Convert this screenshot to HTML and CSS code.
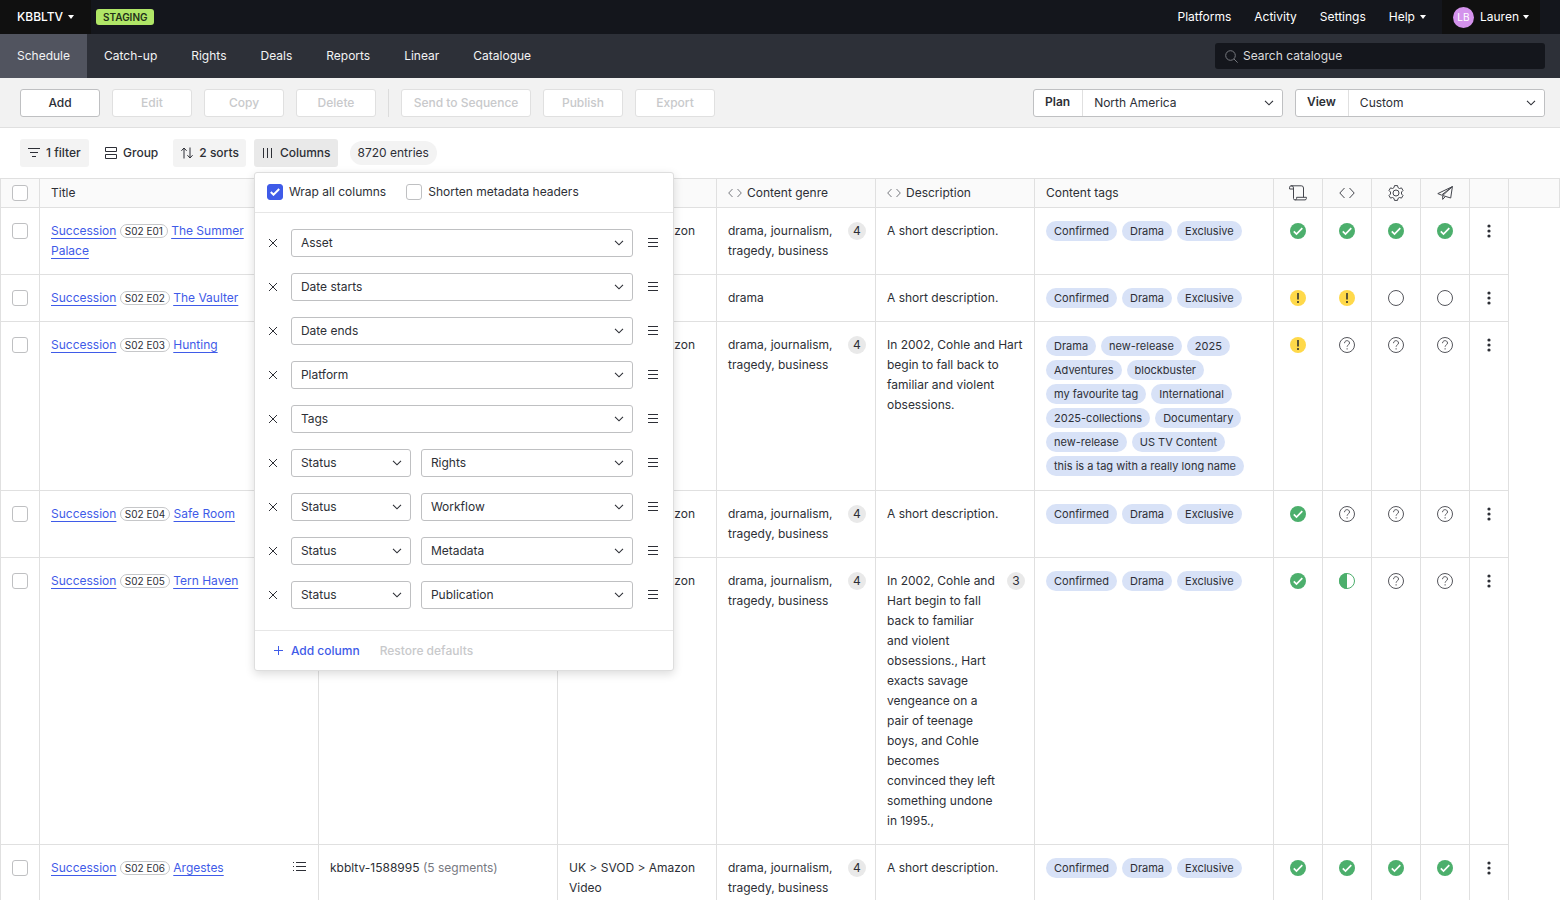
FILE: index.html
```html
<!DOCTYPE html>
<html lang="en">
<head>
<meta charset="utf-8">
<title>Schedule</title>
<link rel="stylesheet" href="styles.css">
</head>
<body>
<svg class="sprite" aria-hidden="true">
  <symbol id="i-ok" viewBox="0 0 16 16"><circle cx="8" cy="8" r="8" fill="#4caf6c"/><path d="M3.8 8.4l2.7 2.7 5.8-5.9" fill="none" stroke="#fff" stroke-width="1.7"/></symbol>
  <symbol id="i-warn" viewBox="0 0 16 16"><circle cx="8" cy="8" r="8" fill="#ffd94a"/><path d="M8 3v6.6M8 11v2" fill="none" stroke="#4b4632" stroke-width="1.8"/></symbol>
  <symbol id="i-none" viewBox="0 0 16 16"><circle cx="8" cy="8" r="7.5" fill="none" stroke="#55565c"/></symbol>
  <symbol id="i-unknown" viewBox="0 0 16 16"><circle cx="8" cy="8" r="7.5" fill="none" stroke="#55565c"/><path d="M5.5 6.200c0-3.400 5-3.300 5-.2 0 1.900-2.400 1.900-2.400 3.700M8.100 11.200v1.300" fill="none" stroke="#55565c"/></symbol>
  <symbol id="i-half" viewBox="0 0 16 16"><circle cx="8" cy="8" r="7.5" fill="none" stroke="#4caf6c"/><path d="M8 0a8 8 0 0 0 0 16z" fill="#4caf6c"/></symbol>
  <symbol id="i-more" viewBox="0 0 4 14"><circle cx="2" cy="2" r="1.600" fill="#2d2f36"/><circle cx="2" cy="7" r="1.600" fill="#2d2f36"/><circle cx="2" cy="12" r="1.600" fill="#2d2f36"/></symbol>
  <symbol id="i-code" viewBox="0 0 16 12"><path d="M5.500 1L.8 6l4.700 5M10.500 1l4.700 5-4.700 5" fill="none" stroke="currentColor"/></symbol>
  <symbol id="i-code-sm" viewBox="0 0 14 10"><path d="M4.500 1L.7 5l3.800 4M9.500 1l3.800 4-3.800 4" fill="none" stroke="currentColor"/></symbol>
  <symbol id="i-caret" viewBox="0 0 6 4"><path d="M0 0h6L3 4z" fill="#fff"/></symbol>
  <symbol id="i-x" viewBox="0 0 10 10"><path d="M1 1l8 8M9 1l-8 8" fill="none" stroke="#2d2f36"/></symbol>
  <symbol id="i-drag" viewBox="0 0 10 10"><path d="M0 .5h10M0 4.500h10M0 8.500h10" fill="none" stroke="#2d2f36"/></symbol>
  <symbol id="i-list" viewBox="0 0 14 10"><path d="M3 .5h10M3 4.500h10M3 8.500h10M0 .5h1M0 4.500h1M0 8.500h1" fill="none" stroke="#2d2f36"/></symbol>
</svg>

<header class="topbar">
  <button class="brand">KBBLTV <svg class="caret"><use href="#i-caret"/></svg></button>
  <span class="env">STAGING</span>
  <nav class="toplinks">
    <a href="#">Platforms</a>
    <a href="#">Activity</a>
    <a href="#">Settings</a>
    <button class="help">Help <svg class="caret"><use href="#i-caret"/></svg></button>
  </nav>
  <button class="user"><span class="avatar">LB</span><span>Lauren</span><svg class="caret"><use href="#i-caret"/></svg></button>
</header>

<div class="mainnav">
  <nav class="tabs">
    <a class="tab active" href="#">Schedule</a>
    <a class="tab" href="#">Catch-up</a>
    <a class="tab" href="#">Rights</a>
    <a class="tab" href="#">Deals</a>
    <a class="tab" href="#">Reports</a>
    <a class="tab" href="#">Linear</a>
    <a class="tab" href="#">Catalogue</a>
  </nav>
  <label class="search">
    <svg width="13" height="13" viewBox="0 0 13 13" fill="none" stroke="#77797f"><circle cx="5.500" cy="5.500" r="4.800"/><path d="M9 9l3.600 3.600"/></svg>
    <input type="text" placeholder="Search catalogue" aria-label="Search catalogue">
  </label>
</div>

<div class="toolbar">
  <button class="btn">Add</button>
  <button class="btn" disabled>Edit</button>
  <button class="btn" disabled>Copy</button>
  <button class="btn" disabled>Delete</button>
  <span class="divider"></span>
  <button class="btn wide" disabled>Send to Sequence</button>
  <button class="btn" disabled>Publish</button>
  <button class="btn" disabled>Export</button>
  <div class="picker first"><label for="plan">Plan</label><select id="plan"><option>North America</option></select></div>
  <div class="picker"><label for="view">View</label><select id="view"><option>Custom</option></select></div>
</div>

<div class="filters">
  <button class="chip filled"><svg width="12" height="10" viewBox="0 0 12 10" fill="none" stroke="#2d2f36"><path d="M0 .5h12M2 4.500h8M4 8.500h4"/></svg>1 filter</button>
  <button class="chip"><svg width="12" height="12" viewBox="0 0 12 12" fill="none" stroke="#2d2f36"><path d="M.5.5h11v4H.5zM.5 7.500h11v4H.5z"/></svg>Group</button>
  <button class="chip filled"><svg width="12" height="12" viewBox="0 0 12 12" fill="none" stroke="#2d2f36"><path d="M3 11.500V1M.4 3.800L3 1l2.600 2.800M9 .5V11M6.400 8.200L9 11l2.600-2.800"/></svg>2 sorts</button>
  <div class="columns-menu">
    <button class="chip open" aria-expanded="true"><svg width="12" height="10" viewBox="0 0 12 10" fill="none" stroke="#2d2f36"><path d="M1.500 0v10M5.500 0v10M9.500 0v10"/></svg>Columns</button>
    <div class="popover">
      <div class="pop-head">
        <label><input type="checkbox" checked>Wrap all columns</label>
        <label><input type="checkbox">Shorten metadata headers</label>
      </div>
      <ul class="pop-list">
        <li><button class="icon" aria-label="Remove"><svg width="10" height="10"><use href="#i-x"/></svg></button><select aria-label="Column"><option>Asset</option></select><button class="icon" aria-label="Reorder"><svg width="10" height="10"><use href="#i-drag"/></svg></button></li>
        <li><button class="icon" aria-label="Remove"><svg width="10" height="10"><use href="#i-x"/></svg></button><select aria-label="Column"><option>Date starts</option></select><button class="icon" aria-label="Reorder"><svg width="10" height="10"><use href="#i-drag"/></svg></button></li>
        <li><button class="icon" aria-label="Remove"><svg width="10" height="10"><use href="#i-x"/></svg></button><select aria-label="Column"><option>Date ends</option></select><button class="icon" aria-label="Reorder"><svg width="10" height="10"><use href="#i-drag"/></svg></button></li>
        <li><button class="icon" aria-label="Remove"><svg width="10" height="10"><use href="#i-x"/></svg></button><select aria-label="Column"><option>Platform</option></select><button class="icon" aria-label="Reorder"><svg width="10" height="10"><use href="#i-drag"/></svg></button></li>
        <li><button class="icon" aria-label="Remove"><svg width="10" height="10"><use href="#i-x"/></svg></button><select aria-label="Column"><option>Tags</option></select><button class="icon" aria-label="Reorder"><svg width="10" height="10"><use href="#i-drag"/></svg></button></li>
        <li><button class="icon" aria-label="Remove"><svg width="10" height="10"><use href="#i-x"/></svg></button><select class="kind" aria-label="Column"><option>Status</option></select><select aria-label="Status type"><option>Rights</option></select><button class="icon" aria-label="Reorder"><svg width="10" height="10"><use href="#i-drag"/></svg></button></li>
        <li><button class="icon" aria-label="Remove"><svg width="10" height="10"><use href="#i-x"/></svg></button><select class="kind" aria-label="Column"><option>Status</option></select><select aria-label="Status type"><option>Workflow</option></select><button class="icon" aria-label="Reorder"><svg width="10" height="10"><use href="#i-drag"/></svg></button></li>
        <li><button class="icon" aria-label="Remove"><svg width="10" height="10"><use href="#i-x"/></svg></button><select class="kind" aria-label="Column"><option>Status</option></select><select aria-label="Status type"><option>Metadata</option></select><button class="icon" aria-label="Reorder"><svg width="10" height="10"><use href="#i-drag"/></svg></button></li>
        <li><button class="icon" aria-label="Remove"><svg width="10" height="10"><use href="#i-x"/></svg></button><select class="kind" aria-label="Column"><option>Status</option></select><select aria-label="Status type"><option>Publication</option></select><button class="icon" aria-label="Reorder"><svg width="10" height="10"><use href="#i-drag"/></svg></button></li>
      </ul>
      <div class="pop-foot">
        <button class="add"><svg width="9" height="10" viewBox="0 0 9 10" fill="none" stroke="#3f5be8"><path d="M4.500 0v9M0 4.500h9"/></svg>Add column</button>
        <button class="restore" disabled>Restore defaults</button>
      </div>
    </div>
  </div>
  <span class="entries">8720 entries</span>
</div>

<table class="grid">
  <colgroup>
    <col class="c-check"><col class="c-title"><col class="c-wide"><col class="c-text"><col class="c-text"><col class="c-text"><col class="c-wide"><col class="c-stat"><col class="c-stat"><col class="c-stat"><col class="c-stat"><col class="c-more"><col>
  </colgroup>
  <thead>
    <tr>
      <th><input type="checkbox" aria-label="Select all"></th>
      <th>Title</th>
      <th></th>
      <th></th>
      <th><span class="meta"><svg width="14" height="10"><use href="#i-code-sm"/></svg>Content genre</span></th>
      <th><span class="meta"><svg width="14" height="10"><use href="#i-code-sm"/></svg>Description</span></th>
      <th>Content tags</th>
      <th class="mid"><svg width="18" height="16" viewBox="0 0 18 16" fill="none" stroke="#44464d"><path d="M4.500 4V13.500a1.500 1.500 0 0 0 1.700 1.400H16a1.500 1.500 0 0 0 1.400-1.400v-1.200H7.600v1.200a1.500 1.500 0 0 1-1.400 1.400M14.500 12.300V3A2.200 2.200 0 0 0 12.300.8H2M.6 4V2.200A1.500 1.500 0 0 1 2 .8a2.200 2.200 0 0 1 2.500 2.200V4z"/></svg></th>
      <th class="mid"><svg width="16" height="12"><use href="#i-code"/></svg></th>
      <th class="mid"><svg width="16" height="16" viewBox="0 0 16 16" fill="none" stroke="#44464d" stroke-linejoin="round"><circle cx="8" cy="8" r="3"/><path d="M6.500.6h3l.5 2 1.500.9 2-.6 1.500 2.600-1.500 1.500v2l1.500 1.500-1.500 2.600-2-.6-1.500.9-.5 2h-3l-.5-2-1.500-.9-2 .6L1 10.500 2.500 9V7L1 5.500l1.500-2.600 2 .6L6 2.600z"/></svg></th>
      <th class="mid"><svg width="16" height="14" viewBox="0 0 16 14" fill="none" stroke="#44464d" stroke-linejoin="round"><path d="M15.400.6L.8 7.600l3.700 1.500zM15.400.6L5.700 9.500V13.400L8.300 10.600M15.400.6L13.700 12 5.700 9.500"/></svg></th>
      <th></th>
      <th></th>
    </tr>
  </thead>
  <tbody>
    <tr>
      <td><input type="checkbox" aria-label="Select row"></td>
      <td><div class="split"><div><a href="#">Succession</a> <span class="ep">S02 E01</span> <a href="#">The Summer Palace</a></div><svg class="list" width="14" height="10"><use href="#i-list"/></svg></div></td>
      <td></td>
      <td>UK &gt; SVOD &gt; Amazon Video</td>
      <td><div class="split"><div>drama, journalism, tragedy, business</div><span class="count">4</span></div></td>
      <td>A short description.</td>
      <td><div class="tags"><span>Confirmed</span><span>Drama</span><span>Exclusive</span></div></td>
      <td class="mid"><svg class="st"><use href="#i-ok"/></svg></td>
      <td class="mid"><svg class="st"><use href="#i-ok"/></svg></td>
      <td class="mid"><svg class="st"><use href="#i-ok"/></svg></td>
      <td class="mid"><svg class="st"><use href="#i-ok"/></svg></td>
      <td class="mid"><button class="more" aria-label="More"><svg width="4" height="14"><use href="#i-more"/></svg></button></td>
    </tr>
    <tr>
      <td><input type="checkbox" aria-label="Select row"></td>
      <td><div class="split"><div><a href="#">Succession</a> <span class="ep">S02 E02</span> <a href="#">The Vaulter</a></div></div></td>
      <td></td>
      <td></td>
      <td>drama</td>
      <td>A short description.</td>
      <td><div class="tags"><span>Confirmed</span><span>Drama</span><span>Exclusive</span></div></td>
      <td class="mid"><svg class="st"><use href="#i-warn"/></svg></td>
      <td class="mid"><svg class="st"><use href="#i-warn"/></svg></td>
      <td class="mid"><svg class="st"><use href="#i-none"/></svg></td>
      <td class="mid"><svg class="st"><use href="#i-none"/></svg></td>
      <td class="mid"><button class="more" aria-label="More"><svg width="4" height="14"><use href="#i-more"/></svg></button></td>
    </tr>
    <tr>
      <td><input type="checkbox" aria-label="Select row"></td>
      <td><div class="split"><div><a href="#">Succession</a> <span class="ep">S02 E03</span> <a href="#">Hunting</a></div></div></td>
      <td></td>
      <td>UK &gt; SVOD &gt; Amazon Video</td>
      <td><div class="split"><div>drama, journalism, tragedy, business</div><span class="count">4</span></div></td>
      <td>In 2002, Cohle and Hart begin to fall back to familiar and violent obsessions.</td>
      <td><div class="tags many"><span>Drama</span><span>new-release</span><span>2025</span><span>Adventures</span><span>blockbuster</span><span>my favourite tag</span><span>International</span><span>2025-collections</span><span>Documentary</span><span>new-release</span><span>US TV Content</span><span>this is a tag with a really long name</span></div></td>
      <td class="mid"><svg class="st"><use href="#i-warn"/></svg></td>
      <td class="mid"><svg class="st"><use href="#i-unknown"/></svg></td>
      <td class="mid"><svg class="st"><use href="#i-unknown"/></svg></td>
      <td class="mid"><svg class="st"><use href="#i-unknown"/></svg></td>
      <td class="mid"><button class="more" aria-label="More"><svg width="4" height="14"><use href="#i-more"/></svg></button></td>
    </tr>
    <tr>
      <td><input type="checkbox" aria-label="Select row"></td>
      <td><div class="split"><div><a href="#">Succession</a> <span class="ep">S02 E04</span> <a href="#">Safe Room</a></div></div></td>
      <td></td>
      <td>UK &gt; SVOD &gt; Amazon Video</td>
      <td><div class="split"><div>drama, journalism, tragedy, business</div><span class="count">4</span></div></td>
      <td>A short description.</td>
      <td><div class="tags"><span>Confirmed</span><span>Drama</span><span>Exclusive</span></div></td>
      <td class="mid"><svg class="st"><use href="#i-ok"/></svg></td>
      <td class="mid"><svg class="st"><use href="#i-unknown"/></svg></td>
      <td class="mid"><svg class="st"><use href="#i-unknown"/></svg></td>
      <td class="mid"><svg class="st"><use href="#i-unknown"/></svg></td>
      <td class="mid"><button class="more" aria-label="More"><svg width="4" height="14"><use href="#i-more"/></svg></button></td>
    </tr>
    <tr>
      <td><input type="checkbox" aria-label="Select row"></td>
      <td><div class="split"><div><a href="#">Succession</a> <span class="ep">S02 E05</span> <a href="#">Tern Haven</a></div></div></td>
      <td></td>
      <td>UK &gt; SVOD &gt; Amazon Video</td>
      <td><div class="split"><div>drama, journalism, tragedy, business</div><span class="count">4</span></div></td>
      <td><div class="split"><div>In 2002, Cohle and Hart begin to fall back to familiar and violent obsessions., Hart exacts savage vengeance on a pair of teenage boys, and Cohle becomes convinced they left something undone in 1995.,</div><span class="count">3</span></div></td>
      <td><div class="tags"><span>Confirmed</span><span>Drama</span><span>Exclusive</span></div></td>
      <td class="mid"><svg class="st"><use href="#i-ok"/></svg></td>
      <td class="mid"><svg class="st"><use href="#i-half"/></svg></td>
      <td class="mid"><svg class="st"><use href="#i-unknown"/></svg></td>
      <td class="mid"><svg class="st"><use href="#i-unknown"/></svg></td>
      <td class="mid"><button class="more" aria-label="More"><svg width="4" height="14"><use href="#i-more"/></svg></button></td>
    </tr>
    <tr>
      <td><input type="checkbox" aria-label="Select row"></td>
      <td><div class="split"><div><a href="#">Succession</a> <span class="ep">S02 E06</span> <a href="#">Argestes</a></div><svg class="list" width="14" height="10"><use href="#i-list"/></svg></div></td>
      <td>kbbltv-1588995 <span class="muted">(5 segments)</span></td>
      <td>UK &gt; SVOD &gt; Amazon Video</td>
      <td><div class="split"><div>drama, journalism, tragedy, business</div><span class="count">4</span></div></td>
      <td>A short description.</td>
      <td><div class="tags"><span>Confirmed</span><span>Drama</span><span>Exclusive</span></div></td>
      <td class="mid"><svg class="st"><use href="#i-ok"/></svg></td>
      <td class="mid"><svg class="st"><use href="#i-ok"/></svg></td>
      <td class="mid"><svg class="st"><use href="#i-ok"/></svg></td>
      <td class="mid"><svg class="st"><use href="#i-ok"/></svg></td>
      <td class="mid"><button class="more" aria-label="More"><svg width="4" height="14"><use href="#i-more"/></svg></button></td>
    </tr>
  </tbody>
</table>
</body>
</html>
```
FILE: styles.css
```css
* { box-sizing: border-box; }
html { height: 100%; overflow: hidden; }
body {
  margin: 0;
  background: #fff;
  color: #2d2f36;
  font-family: Inter, "Liberation Sans", sans-serif;
  font-size: 12px;
  line-height: 20px;
}
button, input, select { font: inherit; color: inherit; }
button { margin: 0; padding: 0; border: 0; background: none; }
svg { display: block; flex: none; }
.sprite { position: absolute; width: 0; height: 0; }
.caret { width: 6px; height: 4px; }

.topbar { display: flex; align-items: center; height: 34px; background: #14161c; color: #fff; }
.topbar a { color: inherit; text-decoration: none; }
.brand {
  display: flex; align-items: center; gap: 5px;
  height: 34px; padding: 0 17px; background: #101010; font-weight: 500;
}
.env {
  margin-left: 5px; padding: 0 7px; border-radius: 3px;
  background: #b0e667; color: #23301a;
  font-size: 10px; font-weight: 600; line-height: 16px;
}
.toplinks { display: flex; align-items: center; gap: 23px; margin-left: auto; }
.help { display: flex; align-items: center; gap: 5px; }
.user {
  display: flex; align-items: center; gap: 4px;
  height: 34px; margin: 0 20px 0 16px; padding: 0 11px; background: #101010;
}
.avatar {
  width: 21px; height: 21px; margin-right: 2px; border-radius: 50%;
  background: #d492ec; font-size: 10px; line-height: 21px; text-align: center;
}

.mainnav {
  display: flex; align-items: center; justify-content: space-between;
  height: 44px; padding-right: 15px; background: #2d3038; color: #fff;
}
.tabs { display: flex; }
.tab { padding: 12px 17px; color: #f3f3f4; text-decoration: none; }
.tab.active { background: #51545f; }
.search {
  display: flex; align-items: center; gap: 5px;
  width: 330px; height: 26px; padding: 0 10px; border-radius: 3px; background: #14161c;
}
.search input { flex: 1; min-width: 0; padding: 0; border: 0; outline: 0; background: none; }
.search input::placeholder { color: #dcdcde; opacity: 1; }

.toolbar {
  display: flex; align-items: center; gap: 12px;
  height: 50px; padding: 1px 15px 0 20px;
  border-bottom: 1px solid #e0e0e0; background: #f2f2f2;
}
.btn {
  width: 80px; height: 28px; border: 1px solid #bfc0c2; border-radius: 3px;
  background: #fff; font-weight: 500;
}
.btn.wide { width: 130px; }
.btn:disabled { border-color: #e0e0e0; color: #c8c9cb; }
.divider { width: 1px; height: 28px; background: #dcdcdc; }
select {
  appearance: none; height: 28px; padding: 0 30px 0 9px;
  border: 1px solid #bfc0c2; border-radius: 3px;
  background: #fff url("data:image/svg+xml,%3Csvg xmlns='http://www.w3.org/2000/svg' width='10' height='6' fill='none' stroke='%232d2f36' stroke-width='1.1'%3E%3Cpath d='M1 .8l4 4 4-4'/%3E%3C/svg%3E") no-repeat right 8px center;
}
.picker { display: flex; width: 250px; height: 28px; border: 1px solid #bfc0c2; border-radius: 3px; background: #fff; }
.picker.first { margin-left: auto; }
.picker label { padding: 2px 12px 0 11px; border-right: 1px solid #e0e0e0; font-weight: 600; }
.picker select { flex: 1; height: 26px; padding-left: 11px; border: 0; }

.filters { display: flex; align-items: center; gap: 8px; height: 50px; padding: 0 20px; }
.chip {
  display: flex; align-items: center; gap: 6px;
  height: 28px; padding: 0 7px 0 8px; border-radius: 3px; font-weight: 500;
}
.chip.filled { min-width: 69px; background: #f3f3f3; }
.chip.open { background: #e9e9e9; }
.entries { margin-left: 4px; padding: 2px 8px; border-radius: 12px; background: #f3f3f3; }

.columns-menu { position: relative; }
.popover {
  position: absolute; top: 33px; left: 0; z-index: 2; width: 420px;
  border: 1px solid #dedede; border-radius: 3px; background: #fff;
  box-shadow: 0 3px 10px rgba(0, 0, 0, .14);
}
.pop-head { display: flex; gap: 20px; padding: 9px 12px 10px; border-bottom: 1px solid #e6e6e6; }
.pop-head label { display: flex; align-items: center; gap: 6px; }
.pop-list { display: grid; gap: 16px; margin: 0; padding: 16px 10px 21px 8px; list-style: none; }
.pop-list li { display: flex; align-items: center; }
.pop-list select { flex: 1; }
.pop-list .kind { flex: none; width: 120px; margin-right: 10px; }
.icon { display: flex; align-items: center; width: 28px; height: 28px; padding-left: 5px; }
.icon:last-child { width: 30px; padding-left: 15px; }
.pop-foot { display: flex; gap: 20px; padding: 10px 18px 9px 19px; border-top: 1px solid #e6e6e6; font-weight: 500; }
.add { display: flex; align-items: center; gap: 8px; color: #3f5be8; }
.restore:disabled { color: #c8c9cb; }

input[type="checkbox"] {
  appearance: none; display: block; width: 16px; height: 16px; margin: 0;
  border: 1px solid #bfc0c2; border-radius: 3px; background: #fff;
}
input[type="checkbox"]:checked {
  border-color: #3f5be8;
  background: #3f5be8 url("data:image/svg+xml,%3Csvg xmlns='http://www.w3.org/2000/svg' width='10' height='8' fill='none' stroke='white' stroke-width='2'%3E%3Cpath d='M.8 4l2.700 2.700L9.200 1'/%3E%3C/svg%3E") no-repeat center;
}

.grid { width: 100%; table-layout: fixed; border-collapse: separate; border-spacing: 0; }
.c-check { width: 40px; }
.c-title { width: 279px; }
.c-wide { width: 239px; }
.c-text { width: 159px; }
.c-stat { width: 49px; }
.c-more { width: 39px; }
th {
  height: 30px; padding: 0 9px 0 11px; text-align: left; font-weight: 400;
  border: solid #e0e0e0; border-width: 1px 1px 1px 0; background: #fafafa;
}
td {
  padding: 13px 9px 13px 11px; vertical-align: top;
  border: solid #e0e0e0; border-width: 0 1px 1px 0;
}
th:first-child, td:first-child { border-left-width: 1px; }
td:first-child { padding-top: 15px; padding-bottom: 0; }
th.mid, td.mid { padding-left: 0; padding-right: 0; }
td.mid { padding-bottom: 0; }
.mid svg { margin: 0 auto; color: #44464d; }
.meta { display: flex; align-items: center; gap: 5px; }
.meta svg { color: #77797f; }
.split { display: flex; gap: 10px; }
.split > div { flex: 1; min-width: 0; }
.list { margin: 4px 2px 0 16px; }
.count {
  flex: none; width: 18px; height: 18px; margin-top: 1px; border-radius: 50%;
  background: #e9e9e9; line-height: 18px; text-align: center;
}
td a { color: #3f5be8; text-underline-offset: 3px; }
.ep { padding: 0 4px; border: 1px solid #c6c7c9; border-radius: 8px; font-size: 10px; }
.muted { color: #77797f; }
.tags { display: flex; flex-wrap: wrap; gap: 4px 5px; }
.tags.many { padding: 1px 0; }
.tags span { padding: 0 8px; border-radius: 10px; background: #d8e2f7; font-size: 11px; }
.st { width: 16px; height: 16px; }
td .st { margin-top: 2px; }
.more { display: flex; width: 100%; height: 20px; align-items: center; }
```
